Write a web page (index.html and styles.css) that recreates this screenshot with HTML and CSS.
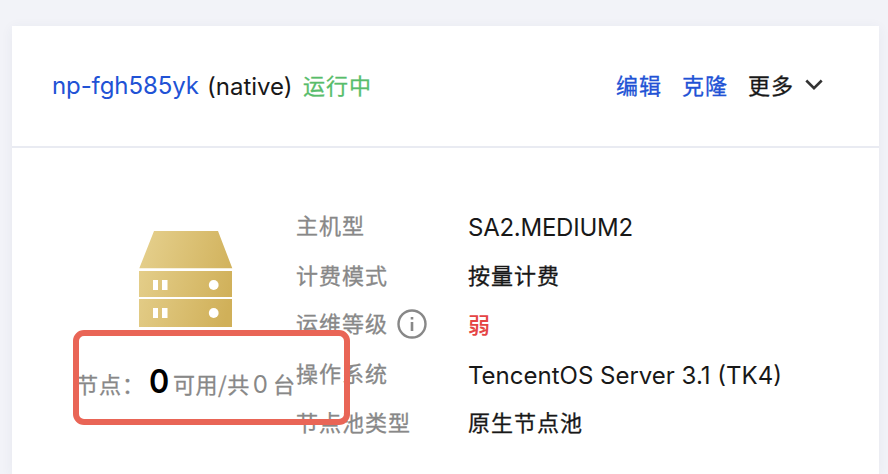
FILE: index.html
```html
<!DOCTYPE html>
<html lang="zh-CN">
<head>
<meta charset="utf-8">
<title>节点池</title>
<link rel="stylesheet" href="styles.css">
</head>
<body>
<main class="card">
  <header class="card-head">
    <a class="pool-id">np-fgh585yk</a>
    <span class="pool-kind">(native)</span>
    <span class="status cjk">运行中</span>
    <nav class="actions cjk">
      <a>编辑</a>
      <a>克隆</a>
      <span class="more">更多
        <svg class="chevron" width="18" height="12" viewBox="0 0 18 12"><path d="M1.300 1.500 9 9.200 16.700 1.500" fill="none" stroke="#333" stroke-width="2.600"/></svg>
      </span>
    </nav>
  </header>
  <section class="card-body">
    <div class="summary">
      <svg class="server" width="94" height="97" viewBox="0 0 94 97">
        <defs><linearGradient id="gold" gradientUnits="userSpaceOnUse" x1="0" y1="36" x2="94" y2="62"><stop offset="0" stop-color="#e4ce8a"/><stop offset="1" stop-color="#d0b059"/></linearGradient></defs>
        <path fill="url(#gold)" d="M15 0H79L93.300 37.300H.300ZM0 40H93V66H0ZM0 68H93V96H0Z"/>
        <g fill="#fff"><path d="M14 49h5v10h-5zM23 49h5.500v10H23zM14 77h5v10h-5zM23 77h5.500v10H23z"/><circle cx="74.700" cy="54" r="4.900"/><circle cx="74.700" cy="82" r="4.900"/></g>
      </svg>
      <p class="nodes cjk"><span class="nodes-label">节点：</span><b>0</b><span class="usable">可用/共</span><span class="total">0</span><span>台</span></p>
      <div class="highlight"></div>
    </div>
    <dl class="details">
      <dt class="cjk">主机型</dt><dd class="latin machine">SA2.MEDIUM2</dd>
      <dt class="cjk billing">计费模式</dt><dd class="cjk billing">按量计费</dd>
      <dt class="cjk">运维等级
        <svg class="info" width="30" height="30" viewBox="0 0 30 30"><circle cx="15" cy="15" r="13.500" fill="none" stroke="#888" stroke-width="2.400"/><path d="M13.700 8h2.600v2.600h-2.600zM13.700 13h2.600v9h-2.600z" fill="#888"/></svg>
      </dt><dd class="cjk weak">弱</dd>
      <dt class="cjk">操作系统</dt><dd class="latin">TencentOS Server 3.1 (TK4)</dd>
      <dt class="cjk">节点池类型</dt><dd class="cjk">原生节点池</dd>
    </dl>
  </section>
</main>
</body>
</html>
```
FILE: styles.css
```css
* { box-sizing: border-box; }
body {
  margin: 0;
  height: 474px;
  overflow: hidden;
  padding: 26px 9px 0 12px;
  background: #f2f3f8;
  color: #181818;
  font: 24px/34px Inter, "Noto Sans CJK SC", sans-serif;
}
.cjk {
  font-family: "Noto Sans CJK SC", sans-serif;
  font-size: 22px;
  letter-spacing: 1px;
  -webkit-text-stroke: .3px currentColor;
}
.card {
  height: 448px;
  background: #fff;
  box-shadow: 0 2px 12px rgba(50, 60, 100, .06);
}
.card-head {
  display: flex;
  align-items: center;
  height: 122px;
  padding: 0 56px 2px 40px;
  border-bottom: 2px solid #e9ebf2;
  white-space: nowrap;
}
.pool-id { width: 155px; padding-top: 1px; color: #2152d5; letter-spacing: -.1px; }
.pool-kind { width: 96px; padding-top: 4px; }
.status { padding-bottom: 2px; color: #58bd6b; }
.actions { display: flex; gap: 20px; margin-left: auto; padding-bottom: 2px; }
.actions a { color: #2152d5; }
.more { display: flex; align-items: center; gap: 11px; }
.chevron { margin-top: 2px; }
.card-body { display: flex; padding-top: 53px; }
.summary { position: relative; width: 284px; flex: none; padding: 30px 0 0 65px; }
.server { display: block; margin-left: 62px; }
.nodes { display: flex; align-items: baseline; margin: 33px 0 0; color: #888; line-height: 40px; white-space: nowrap; }
.nodes-label { width: 70px; margin-left: -1px; }
.nodes b { width: 26px; margin-left: 3px; color: #000; font: 600 33px/40px Inter, sans-serif; letter-spacing: 0; -webkit-text-stroke: 0; transform: scaleX(.93); }
.usable { width: 77px; letter-spacing: .5px; }
.total { width: 24px; padding-left: 3px; font: 24px/40px Inter, sans-serif; letter-spacing: 0; -webkit-text-stroke: 0; }
.highlight {
  position: absolute;
  left: 61px;
  top: 129px;
  width: 277px;
  height: 95px;
  border: 6px solid #e96556;
  border-radius: 11px;
}
.details { display: grid; grid-template-columns: 172px 1fr; grid-template-rows: repeat(5, 49.2px); align-items: center; height: 247px; margin: 0; white-space: nowrap; }
.details dt { display: flex; align-items: center; gap: 9px; color: #888; }
.details dd { margin: 0; }
.details .cjk { padding-bottom: 3px; }
.details .billing { padding-bottom: 1px; }
.info { margin-top: 3px; }
.latin { padding-top: 5px; }
.machine { letter-spacing: -.25px; }
.details .weak { padding-bottom: 2px; color: #e54545; font-weight: 500; -webkit-text-stroke: 0; }
```
